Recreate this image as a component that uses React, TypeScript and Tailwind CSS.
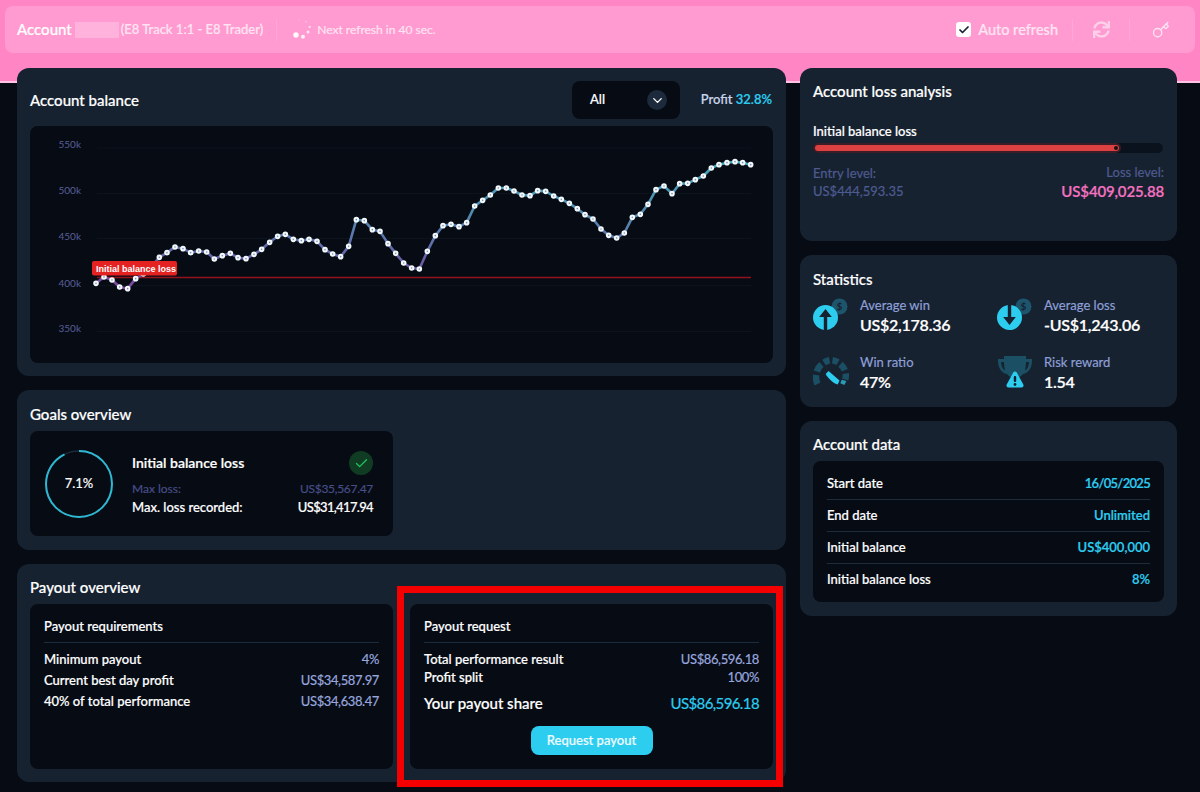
import React from 'react';
import { Key, Check, ChevronDown } from 'lucide-react';
import { FaSync } from 'react-icons/fa';

const POINTS = [
  [198, 475], [222, 456], [246, 465], [269, 486], [293, 491], [317, 461], [340, 447], [364, 425], [388, 397], [411, 383],
  [435, 366], [459, 371], [482, 383], [506, 378], [530, 381], [553, 402], [577, 392], [601, 385], [624, 398], [648, 401],
  [672, 388], [695, 373], [719, 352], [743, 334], [766, 328], [790, 343], [814, 347], [837, 343], [861, 349], [885, 374],
  [908, 387], [932, 395], [956, 364], [979, 284], [1003, 287], [1027, 314], [1050, 319], [1074, 356], [1097, 385], [1121, 414],
].map(([x, y]) => [30 + x / 3, 125 + y / 3]);

const POINTS_RIGHT = [
  [35, 429], [58, 432], [82, 379], [106, 332], [129, 302], [153, 298], [177, 305], [200, 293], [224, 243], [248, 226],
  [271, 210], [295, 189], [319, 189], [342, 198], [366, 210], [390, 212], [413, 197], [437, 199], [461, 213], [484, 223],
  [508, 235], [532, 251], [555, 269], [579, 282], [603, 312], [626, 331], [650, 339], [673, 324], [697, 277], [721, 268],
  [744, 238], [768, 194], [792, 183], [816, 206], [839, 176], [863, 175], [886, 164], [910, 153], [934, 129], [957, 119],
  [981, 113], [1005, 110], [1028, 113], [1052, 119],
].map(([x, y]) => [400 + x / 3, 125 + y / 3]);

const ALL_POINTS = [...POINTS, ...POINTS_RIGHT];

const Card: React.FC<{ title: string; className?: string; children: React.ReactNode }> = ({ title, className, children }) => (
  <section className={`rounded-xl bg-[#172231] ${className ?? ''}`}>
    <h2 className="text-[15px] leading-5 font-medium text-white">{title}</h2>
    {children}
  </section>
);

const Chart = () => (
  <div className="mt-[7px] h-[237px] rounded-lg bg-[#060b14]">
    <svg viewBox="30 126 743 237" className="block h-full w-full">
      <defs>
        <linearGradient id="line" gradientUnits="userSpaceOnUse" x1="0" y1="160" x2="0" y2="292">
          <stop offset="0" stopColor="#44a8ba" />
          <stop offset="0.45" stopColor="#5586b0" />
          <stop offset="0.7" stopColor="#6466a8" />
          <stop offset="1" stopColor="#7f449c" />
        </linearGradient>
      </defs>
      {[148, 193.5, 238.5, 285.5, 331.5].map(y => (
        <line key={y} x1="97" x2="751" y1={y} y2={y} stroke="#0c131d" strokeWidth="1" />
      ))}
      {[['550k', 148], ['500k', 193.5], ['450k', 239.5], ['400k', 287], ['350k', 332]].map(([t, y]) => (
        <text key={t} x="81" y={y} textAnchor="end" fontSize="10" fill="#5a5f9a">{t}</text>
      ))}
      <line x1="97" x2="751" y1="277.5" y2="277.5" stroke="#c4161f" strokeOpacity="0.75" strokeWidth="1.5" />
      <polyline points={ALL_POINTS.map(p => p.join(',')).join(' ')} fill="none" stroke="url(#line)" strokeWidth="2.6" strokeLinejoin="round" />
      {ALL_POINTS.map(([x, y]) => (
        <circle key={x} cx={x} cy={y} r="1.8" fill="#7d8fb0" stroke="#f2f9fc" strokeWidth="2" />
      ))}
      <rect x="92" y="261" width="85" height="14.5" rx="2" fill="#e52222" />
      <text x="96" y="272" fontSize="9" fontWeight="700" fill="#fff" className="font-['Liberation_Sans',sans-serif] [-webkit-text-stroke:0]">Initial balance loss</text>
    </svg>
  </div>
);

const Spinner = () => (
  <svg viewBox="0 0 24 24" className="h-6 w-6">
    <g fill="#fff">
      <circle cx="5" cy="17" r="2.7" fillOpacity=".95" />
      <circle cx="12" cy="18.7" r="2" fillOpacity=".85" />
      <circle cx="17" cy="14" r="1.5" fillOpacity=".75" />
      <circle cx="18.7" cy="9" r="1.2" fillOpacity=".6" />
      <circle cx="15" cy="3.7" r=".8" fillOpacity=".45" />
      <circle cx="8" cy="1.7" r=".6" fillOpacity=".3" />
    </g>
  </svg>
);

const ArrowIcon = ({ down }: { down?: boolean }) => (
  <svg viewBox="0 0 36 32" className="h-8 w-9 shrink-0">
    <circle cx="26.500" cy="8.500" r="8" fill="#1d566c" />
    <text x="26.500" y="12" textAnchor="middle" fontSize="10" fontWeight="700" fill="#172231">$</text>
    <circle cx="12.500" cy="19.500" r="12.500" fill="#2dcdf0" />
    {down ? (
      <path d="M10.800 7h3.400v12h4.600l-6.300 8-6.300-8h4.600z" fill="#172231" />
    ) : (
      <path d="M12.500 11l6.300 8h-4.600v13h-3.400V19H6.200z" fill="#172231" />
    )}
  </svg>
);

const GaugeIcon = () => (
  <svg viewBox="0 0 36 34" className="h-[34px] w-9 shrink-0">
    <g fill="none" stroke="#1b4f63" strokeWidth="6.500">
      <path d="M4.500 29a15 15 0 0 1-1.300-9" />
      <path d="M3.800 16.500a15 15 0 0 1 4.700-7" />
      <path d="M11 7.500a15 15 0 0 1 5.500-2.300" />
      <path d="M19.500 5.200a15 15 0 0 1 5.500 2" />
      <path d="M27.500 9.300a15 15 0 0 1 4.300 6" />
      <path d="M32.700 18.500a15 15 0 0 1-.5 6" />
    </g>
    <path d="M31.300 30a15 15 0 0 0 2-4l-4.500-1.200-1.500 3.500z" fill="#2a9ab5" />
    <path d="M15.500 16l11 9.500-1.800 4c-3.500-.500-10.500-7-12-10.500z" fill="#2dcdf0" />
  </svg>
);

const TrophyIcon = () => (
  <svg viewBox="0 0 36 34" className="h-[34px] w-9 shrink-0">
    <path d="M7 1h22v3h6c.500 8-3 14-9 15-1.500 2-3 3-5 3.500h-6c-2-.500-3.500-1.500-5-3.500C4 18 .500 12 1 4h6z M4 7c.200 4 1.500 7 4 8.500-.500-2.500-1-5.500-1-8.500z M32 7h-3c0 3-.500 6-1 8.500 2.500-1.500 3.800-4.500 4-8.500z" fill="#1b4f63" fillRule="evenodd" />
    <path d="M18 16.500c.800 0 1.400.400 1.800 1.100l6.500 12c.700 1.400-.200 3-1.800 3H11.500c-1.600 0-2.500-1.600-1.800-3l6.500-12c.400-.700 1-1.100 1.800-1.100z" fill="#2dcdf0" />
    <rect x="16.800" y="21" width="2.400" height="6" rx="1" fill="#172231" />
    <circle cx="18" cy="29.500" r="1.400" fill="#172231" />
  </svg>
);

const Stat: React.FC<{ icon: React.ReactNode; label: string; value: string }> = ({ icon, label, value }) => (
  <div className="flex items-start gap-3">
    <div className="mt-[1px] flex w-[35px] shrink-0 justify-center">{icon}</div>
    <div>
      <div className="text-[13px] leading-[17px] text-[#8d9fd6]">{label}</div>
      <div className="text-base leading-[21px] font-semibold tracking-[-0.25px] text-white">{value}</div>
    </div>
  </div>
);

const Row: React.FC<{ label: string; value: string }> = ({ label, value }) => (
  <div className="flex items-center justify-between text-[13px] leading-[18px]">
    <span className="font-medium text-white">{label}</span>
    <span className="tracking-[-0.4px] text-[#98a6de]">{value}</span>
  </div>
);

const DataRow: React.FC<{ label: string; value: string; tight?: boolean }> = ({ label, value, tight }) => (
  <div className="flex h-8 items-center justify-between border-b border-[#1c2c3d] last:border-b-0 text-[13px]">
    <span className="font-medium text-white">{label}</span>
    <span className={tight ? 'font-semibold tracking-[-0.7px] text-[#2dcdf0]' : 'font-semibold text-[#2dcdf0]'}>{value}</span>
  </div>
);

export default function App() {
  return (
    <div className="relative h-[792px] w-[1200px] overflow-hidden bg-[#060b14] font-['Lato',sans-serif] [-webkit-text-stroke:0.2px]">
      <div className="h-[83px] border-b-2 border-[#ffc4e4] bg-[#ff85c4] px-[5px] pt-[6px]">
        <header className="flex h-[47px] items-center rounded-lg bg-[#ff9bd0] pl-3 pr-[25px] text-white">
          <span className="text-[15px] font-medium">Account</span>
          <span className="ml-[3px] h-4 w-[44px] bg-[#ffb2dc]" />
          <span className="ml-[2px] text-[13px] font-medium text-[#ffe4f3]">(E8 Track 1:1 - E8 Trader)</span>
          <span className="ml-[13px] mr-[14px] h-[22px] w-px bg-[#ffa8d8]" />
          <Spinner />
          <span className="ml-[2px] text-xs text-[#ffe4f3]">Next refresh in 40 sec.</span>
          <span className="ml-auto flex h-[15px] w-[15px] items-center justify-center rounded-[3px] bg-white">
            <Check size={12} strokeWidth={3.5} className="text-[#172231]" />
          </span>
          <span className="ml-[7px] text-[14.5px] font-medium text-[#ffe4f3]">Auto refresh</span>
          <span className="ml-[14px] mr-[20px] h-[22px] w-px bg-[#ffa8d8]" />
          <FaSync size={17} className="text-[#ffd0ea]" />
          <span className="ml-[19px] mr-[22px] h-[22px] w-px bg-[#ffa8d8]" />
          <Key size={18} strokeWidth={1.8} className="text-[#ffe4f3]" />
        </header>
      </div>

      <main className="relative mt-[-15px] flex gap-[14px] px-[17px]">
        <div className="flex w-[769px] flex-col gap-[14px]">
          <section className="h-[308px] rounded-xl bg-[#172231] px-[13px] pt-[13px]">
            <div className="flex h-[38px] items-center">
              <h2 className="text-[15px] leading-5 font-medium text-white">Account balance</h2>
              <div className="ml-auto flex h-[38px] w-[108px] items-center justify-between rounded-lg bg-[#060b14] pl-[18px] pr-[13px]">
                <span className="text-[13px] font-medium text-white">All</span>
                <span className="flex h-5 w-5 items-center justify-center rounded-full bg-[#1c2a3c]">
                  <ChevronDown size={15} strokeWidth={2.2} className="text-white" />
                </span>
              </div>
              <div className="ml-[20px] mr-[1px] w-[72px] text-right text-[13px] font-medium text-[#c9d6ea]">
                Profit <span className="font-semibold text-[#2dcdf0]">32.8%</span>
              </div>
            </div>
            <Chart />
          </section>
          <Card title="Goals overview" className="h-[160px] px-[13px] pt-[14px]">
            <div className="mt-[7px] flex h-[105px] w-[363px] items-center rounded-lg bg-[#060b14] pl-[15px] pr-[20px]">
              <div className="relative h-[68px] w-[68px] shrink-0">
                <svg viewBox="0 0 68 68" className="h-full w-full -rotate-90">
                  <circle cx="34" cy="34" r="33" fill="none" stroke="#1c2a38" strokeWidth="1.500" />
                  <circle cx="34" cy="34" r="33" fill="none" stroke="#2fb8d2" strokeWidth="2" strokeDasharray="192 207.300" />
                </svg>
                <span className="absolute inset-0 flex items-center justify-center text-[13px] text-white">7.1%</span>
              </div>
              <div className="ml-[19px] flex-1">
                <div className="flex items-center justify-between">
                  <span className="text-sm font-semibold text-white">Initial balance loss</span>
                  <span className="flex h-6 w-6 items-center justify-center rounded-full bg-[#113c24]">
                    <Check size={15} strokeWidth={2} className="text-[#22c55e]" />
                  </span>
                </div>
                <div className="mt-[5px] flex justify-between text-xs leading-[18px] text-[#474d85]">
                  <span>Max loss:</span>
                  <span className="tracking-[-0.3px]">US$35,567.47</span>
                </div>
                <div className="flex justify-between text-[13px] leading-[18px] font-medium text-white">
                  <span>Max. loss recorded:</span>
                  <span className="tracking-[-0.65px]">US$31,417.94</span>
                </div>
              </div>
            </div>
          </Card>
          <Card title="Payout overview" className="h-[218px] px-[13px] pt-[13px]">
            <div className="mt-[7px] flex gap-[17px]">
              <div className="h-[165px] flex-1 rounded-lg bg-[#060b14] px-[14px] pt-[13px]">
                <div className="border-b border-[#1c2c3d] pb-[7px] text-[13px] leading-[18px] font-medium text-white">Payout requirements</div>
                <div className="mt-[7px] flex flex-col gap-[3px]">
                  <Row label="Minimum payout" value="4%" />
                  <Row label="Current best day profit" value="US$34,587.97" />
                  <Row label="40% of total performance" value="US$34,638.47" />
                </div>
              </div>
              <div className="h-[165px] flex-1 rounded-lg bg-[#060b14] px-[14px] pt-[13px]">
                <div className="border-b border-[#1c2c3d] pb-[7px] text-[13px] leading-[18px] font-medium text-white">Payout request</div>
                <div className="mt-[7px]">
                  <Row label="Total performance result" value="US$86,596.18" />
                  <Row label="Profit split" value="100%" />
                </div>
                <div className="mt-[7px] flex justify-between text-[15px] leading-5">
                  <span className="font-medium text-white">Your payout share</span>
                  <span className="tracking-[-0.6px] text-[#2dcdf0]">US$86,596.18</span>
                </div>
                <button className="mx-auto mt-[13px] block h-[29px] w-[122px] rounded-lg bg-[#2dcdf0] text-[13px] font-medium text-[#eefbff]">Request payout</button>
              </div>
            </div>
          </Card>
        </div>

        <div className="flex w-[377px] flex-col gap-[14px]">
          <Card title="Account loss analysis" className="h-[173px] px-[13px] pt-[13px]">
            <div className="mt-[21px] text-[13px] leading-[18px] font-medium text-white">Initial balance loss</div>
            <div className="mt-[3px] h-[10px] w-[350px] rounded-full bg-[#0a121d]">
              <div className="relative h-[10px] w-[308px] rounded-full border-2 border-[#3b1d28] bg-[#dd4040]">
                <span className="absolute right-[1px] top-[1px] h-1 w-1 rounded-full bg-[#1b1010]" />
              </div>
            </div>
            <div className="mt-[10px] flex w-[351px] justify-between">
              <div className="pt-[1px] text-[13px] leading-[18px] text-[#4d5b90]">
                <div>Entry level:</div>
                <div>US$444,593.35</div>
              </div>
              <div className="text-right">
                <div className="text-[13px] leading-[18px] text-[#4d5b90]">Loss level:</div>
                <div className="text-[15px] leading-5 font-semibold tracking-[-0.15px] text-[#f472c0]">US$409,025.88</div>
              </div>
            </div>
          </Card>
          <Card title="Statistics" className="h-[152px] px-[13px] pt-[14px]">
            <div className="mt-[8px] grid grid-cols-[184px_1fr] gap-y-[19px]">
              <Stat icon={<ArrowIcon />} label="Average win" value="US$2,178.36" />
              <Stat icon={<ArrowIcon down />} label="Average loss" value="-US$1,243.06" />
              <Stat icon={<GaugeIcon />} label="Win ratio" value="47%" />
              <Stat icon={<TrophyIcon />} label="Risk reward" value="1.54" />
            </div>
          </Card>
          <Card title="Account data" className="h-[195px] px-[13px] pt-[13px]">
            <div className="mt-[7px] h-[141px] w-[351px] rounded-lg bg-[#060b14] px-[14px] pt-[7px]">
              <DataRow label="Start date" value="16/05/2025" tight />
              <DataRow label="End date" value="Unlimited" />
              <DataRow label="Initial balance" value="US$400,000" />
              <DataRow label="Initial balance loss" value="8%" />
            </div>
          </Card>
        </div>
      </main>

      <div className="absolute left-[397px] top-[586px] h-[201px] w-[386px] border-[7px] border-[#f40000]" />
    </div>
  );
}
